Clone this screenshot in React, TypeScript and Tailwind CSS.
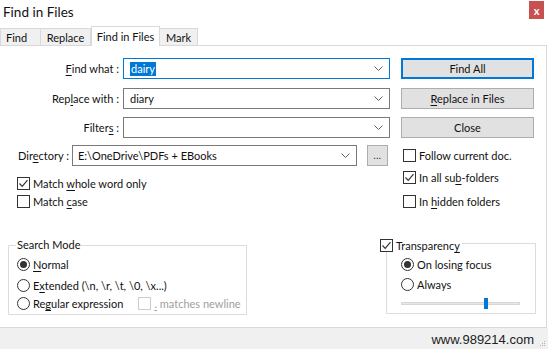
import React from "react";

const Check = ({ checked, disabled }: { checked?: boolean; disabled?: boolean }) => (
  <span
    className={`flex items-center justify-center w-[13px] h-[13px] border bg-white shrink-0 ${
      disabled ? "border-[#cccccc]" : "border-[#333333]"
    }`}
  >
    {checked && (
      <svg width="11" height="11" viewBox="0 0 11 11">
        <path d="M1.5 5.5 L4.2 8.3 L9.5 2.2" fill="none" stroke="#333333" strokeWidth="1.2" />
      </svg>
    )}
  </span>
);

const Radio = ({ checked }: { checked?: boolean }) => (
  <span className="flex items-center justify-center w-[13px] h-[13px] rounded-full border border-[#333333] bg-white shrink-0">
    {checked && <span className="w-[7px] h-[7px] rounded-full bg-[#333333]" />}
  </span>
);

const Chevron = () => (
  <svg width="9" height="5" viewBox="0 0 9 5" className="shrink-0">
    <path d="M0.5 0.5 L4.5 4.5 L8.5 0.5" fill="none" stroke="#606060" strokeWidth="1" />
  </svg>
);

const Combo = ({
  w,
  focused,
  children,
}: {
  w: string;
  focused?: boolean;
  children?: React.ReactNode;
}) => (
  <div
    className={`${w} h-[21px] flex items-center justify-between pl-[4px] pr-[6px] border bg-white ${
      focused ? "border-[#0078d7]" : "border-[#7a7a7a]"
    }`}
  >
    <div className="flex items-center leading-none whitespace-nowrap">{children}</div>
    <Chevron />
  </div>
);

const Btn = ({ children, primary }: { children: React.ReactNode; primary?: boolean }) => (
  <div
    className={`w-[133px] h-[21px] flex items-center justify-center bg-[#e1e1e1] whitespace-nowrap ${
      primary ? "border-2 border-[#0078d7]" : "border border-[#adadad]"
    }`}
  >
    {children}
  </div>
);

const U = ({ children }: { children: React.ReactNode }) => (
  <span className="underline underline-offset-[2px]">{children}</span>
);

const Row = ({ children, cls }: { children: React.ReactNode; cls?: string }) => (
  <div className={`flex items-center gap-[3px] h-[13px] whitespace-nowrap ${cls ?? ""}`}>{children}</div>
);

export default function App() {
  return (
    <div className="w-[548px] h-[349px] bg-white flex flex-col overflow-hidden text-[11px] text-[#111] font-['Lato',sans-serif] leading-none">
      {/* Title bar */}
      <div className="h-[25px] flex items-start justify-between shrink-0">
        <div className="pl-[3px] pt-[6px] text-[13.5px] whitespace-nowrap">Find in Files</div>
        <div className="mt-[1px] mr-[4px] w-[15px] h-[18px] bg-[#c75050] flex items-center justify-center text-white text-[11px] font-bold">
          x
        </div>
      </div>

      {/* Tabs */}
      <div className="h-[20px] flex items-end shrink-0 relative z-10 whitespace-nowrap">
        <div className="w-[41px] h-[17px] flex items-center pl-[5px] bg-[#f0f0f0] border border-b-0 border-[#d9d9d9]">Find</div>
        <div className="w-[50px] h-[17px] flex items-center justify-center bg-[#f0f0f0] border border-l-0 border-b-0 border-[#d9d9d9]">Replace</div>
        <div className="w-[69px] h-[20px] -mb-px flex items-start pt-[4px] justify-center bg-white border border-b-0 border-[#d9d9d9]">Find in Files</div>
        <div className="w-[38px] h-[17px] flex items-center justify-center bg-[#f0f0f0] border border-l-0 border-b-0 border-[#d9d9d9]">Mark</div>
      </div>

      {/* Panel */}
      <div className="w-[547px] h-[283px] shrink-0 border-t border-r border-b border-[#d9d9d9] flex flex-col pt-[12px]">
        {/* rows 1-3 */}
        <div className="flex items-center h-[21px] whitespace-nowrap">
          <div className="w-[119px] text-right"><U>F</U>ind what :</div>
          <div className="ml-[4px]">
            <Combo w="w-[267px]" focused>
              <span className="ml-[2px] bg-[#0078d7] text-white px-[1px] h-[14px] flex items-center">dairy</span>
            </Combo>
          </div>
          <div className="ml-[11px]">
            <Btn primary>Find All</Btn>
          </div>
        </div>
        <div className="flex items-center h-[21px] mt-[9px] whitespace-nowrap">
          <div className="w-[119px] text-right">Rep<U>l</U>ace with :</div>
          <div className="ml-[4px]">
            <Combo w="w-[267px]">
              <span className="ml-[2px]">diary</span>
            </Combo>
          </div>
          <div className="ml-[11px]">
            <Btn><span><U>R</U>eplace in Files</span></Btn>
          </div>
        </div>
        <div className="flex items-center h-[21px] mt-[8px] whitespace-nowrap">
          <div className="w-[119px] text-right">Filter<U>s</U> :</div>
          <div className="ml-[4px]">
            <Combo w="w-[267px]" />
          </div>
          <div className="ml-[11px]">
            <Btn>Close</Btn>
          </div>
        </div>

        {/* Directory row */}
        <div className="flex items-center h-[21px] mt-[7px] pl-[18px] whitespace-nowrap">
          <div className="w-[54px]">Dir<U>e</U>ctory :</div>
          <Combo w="w-[285px]">
            <span className="ml-[1px]">E:\OneDrive\PDFs + EBooks</span>
          </Combo>
          <div className="ml-[10px] w-[21px] h-[21px] bg-[#e1e1e1] border border-[#adadad] flex items-end justify-center pb-[5px] text-[9px] tracking-[0.5px]">
            ...
          </div>
          <div className="ml-[15px]">
            <Row>
              <Check />
              <span>Follow current doc.</span>
            </Row>
          </div>
        </div>

        {/* Checkbox columns */}
        <div className="flex h-[42px]">
          <div className="pl-[17px] pt-[11px] flex flex-col gap-[5px] w-[403px]">
            <Row>
              <Check checked />
              <span>Match <U>w</U>hole word only</span>
            </Row>
            <Row>
              <Check />
              <span>Match <U>c</U>ase</span>
            </Row>
          </div>
          <div className="pt-[5px] flex flex-col gap-[11px]">
            <Row>
              <Check checked />
              <span>In all su<U>b</U>-folders</span>
            </Row>
            <Row>
              <Check />
              <span>In <U>h</U>idden folders</span>
            </Row>
          </div>
        </div>

        {/* Group boxes */}
        <div className="flex items-start mt-[35px]">
          <div className="ml-[8px] mt-[2px] w-[239px] h-[70px] border border-[#dcdcdc] relative pl-[8px] pt-[12px] flex flex-col gap-[8px]">
            <span className="absolute -top-[7px] left-[7px] bg-white px-[1px] whitespace-nowrap">Search Mode</span>
            <Row>
              <Radio checked />
              <span><U>N</U>ormal</span>
            </Row>
            <Row>
              <Radio />
              <span>E<U>x</U>tended (\n, \r, \t, \0, \x...)</span>
            </Row>
            <Row cls="-mt-[3px]">
              <Radio />
              <span>Re<U>g</U>ular expression</span>
              <span className="ml-[12px] flex items-center gap-[3px] text-[#a0a0a0]">
                <Check disabled />
                <span><U>.</U> matches newline</span>
              </span>
            </Row>
          </div>

          <div className="ml-[139px] w-[150px] h-[71px] border border-[#dcdcdc] relative pl-[14px] pt-[14px] flex flex-col gap-[7px]">
            <span className="absolute -top-[5px] -left-[7px] bg-white pr-[2px] flex items-center gap-[3px] whitespace-nowrap">
              <Check checked />
              <span>Transparenc<U>y</U></span>
            </span>
            <Row>
              <Radio checked />
              <span>On losing focus</span>
            </Row>
            <Row>
              <Radio />
              <span>Always</span>
            </Row>
            <div className="relative w-[119px] h-[11px] flex items-center">
              <div className="w-full h-[3px] bg-[#e7e7e7] border border-[#d6d6d6]" />
              <div className="absolute left-[83px] top-0 w-[4px] h-[11px] bg-[#0078d7]" />
            </div>
          </div>
        </div>
      </div>

      {/* Status bar */}
      <div className="flex-1 bg-[#f0f0f0] flex items-center justify-end pr-[14px] relative">
        <span className="font-['Liberation_Sans',sans-serif] text-[13px] text-[#222] mt-[2px]">www.989214.com</span>
        <svg width="7" height="7" viewBox="0 0 7 7" className="absolute right-[2px] bottom-[2px]">
          <rect x="5" y="1" width="1" height="1" fill="#b0b0b0" />
          <rect x="3" y="3" width="1" height="1" fill="#b0b0b0" />
          <rect x="5" y="3" width="1" height="1" fill="#b0b0b0" />
          <rect x="1" y="5" width="1" height="1" fill="#b0b0b0" />
          <rect x="3" y="5" width="1" height="1" fill="#b0b0b0" />
          <rect x="5" y="5" width="1" height="1" fill="#b0b0b0" />
        </svg>
      </div>
    </div>
  );
}
